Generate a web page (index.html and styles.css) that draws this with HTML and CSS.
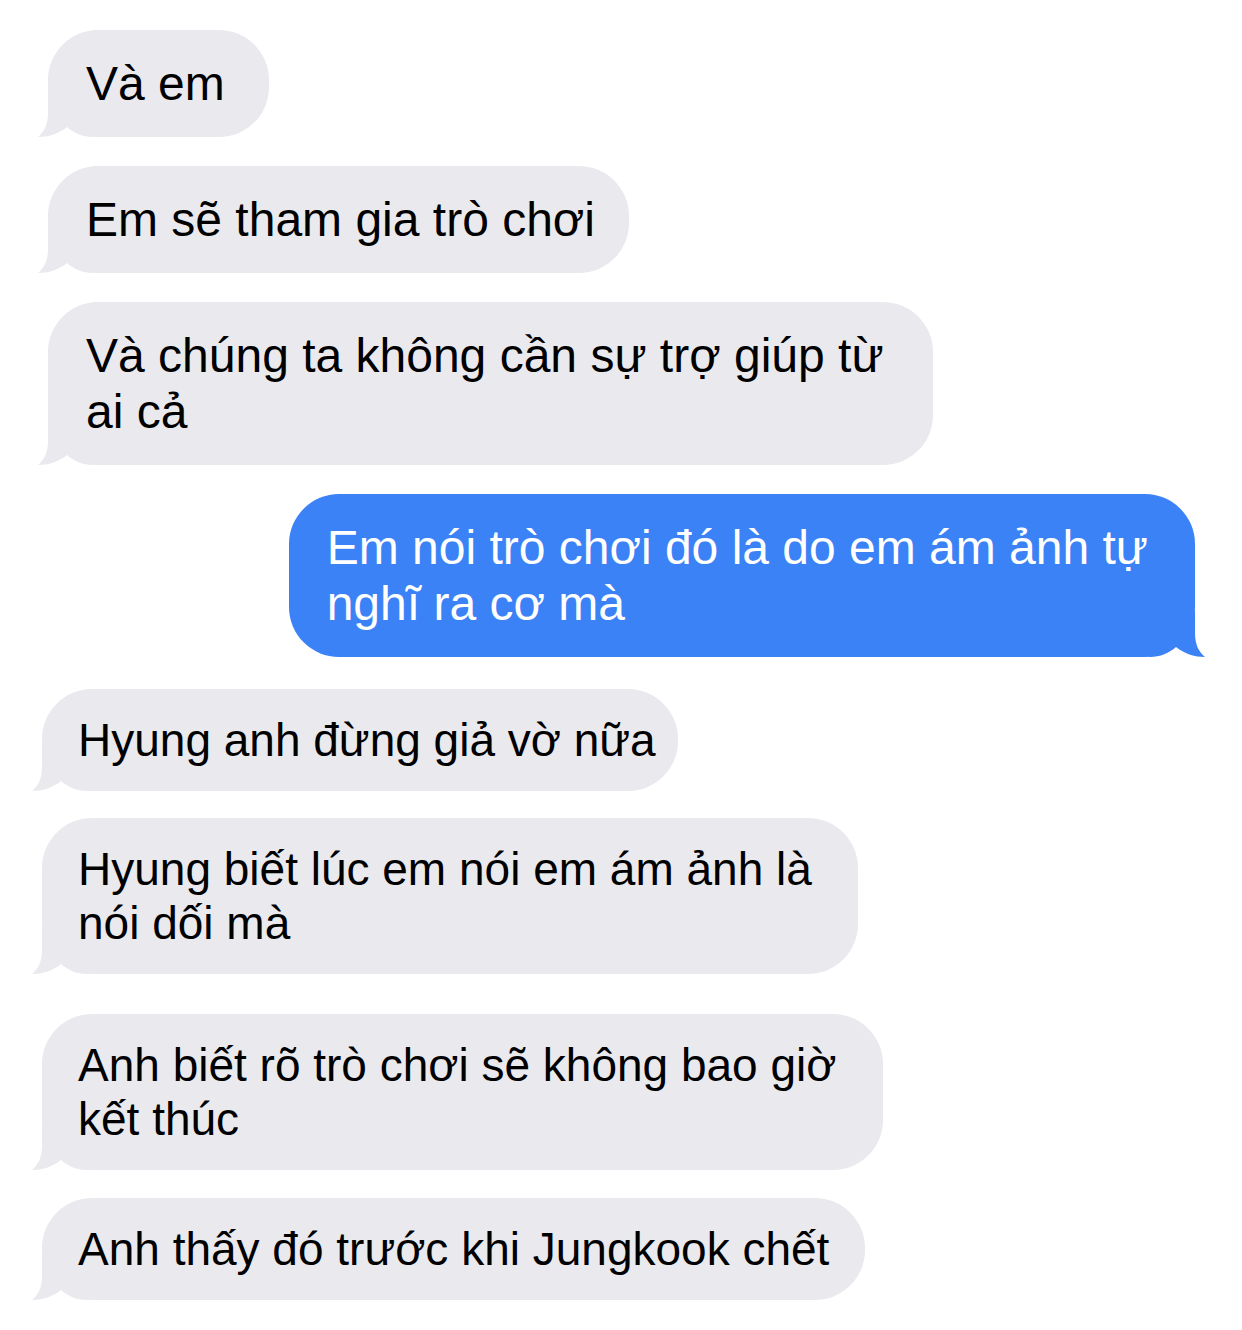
FILE: index.html
```html
<!DOCTYPE html>
<html lang="vi">
<head>
<meta charset="utf-8">
<title>Tin nhắn</title>
<link rel="stylesheet" href="styles.css">
</head>
<body>
<main class="chat">
  <div class="bubble in top w1">Và em<svg class="tail" viewBox="0 0 56 46" width="56" height="46"><path d="M10 0 L10 22 C10 34 6 41 0 46 C10 46 20 43 29 36 C36 42 44 46 56 46 L56 0 Z"/></svg></div>
  <div class="bubble in top g2 w2">Em sẽ tham gia trò chơi<svg class="tail" viewBox="0 0 56 46" width="56" height="46"><path d="M10 0 L10 22 C10 34 6 41 0 46 C10 46 20 43 29 36 C36 42 44 46 56 46 L56 0 Z"/></svg></div>
  <div class="bubble in top g2 w3">Và chúng ta không cần sự trợ giúp từ<br>ai cả<svg class="tail" viewBox="0 0 56 46" width="56" height="46"><path d="M10 0 L10 22 C10 34 6 41 0 46 C10 46 20 43 29 36 C36 42 44 46 56 46 L56 0 Z"/></svg></div>
  <div class="bubble out top g2 w4">Em nói trò chơi đó là do em ám ảnh tự<br>nghĩ ra cơ mà<svg class="tail" viewBox="0 0 56 46" width="56" height="46"><path d="M10 0 L10 22 C10 34 6 41 0 46 C10 46 20 43 29 36 C36 42 44 46 56 46 L56 0 Z"/></svg></div>
  <div class="bubble in bottom g3 w5">Hyung anh đừng giả vờ nữa<svg class="tail" viewBox="0 0 56 46" width="56" height="46"><path d="M10 0 L10 22 C10 34 6 41 0 46 C10 46 20 43 29 36 C36 42 44 46 56 46 L56 0 Z"/></svg></div>
  <div class="bubble in bottom g4 w6">Hyung biết lúc em nói em ám ảnh là<br>nói dối mà<svg class="tail" viewBox="0 0 56 46" width="56" height="46"><path d="M10 0 L10 22 C10 34 6 41 0 46 C10 46 20 43 29 36 C36 42 44 46 56 46 L56 0 Z"/></svg></div>
  <div class="bubble in bottom g5 w7">Anh biết rõ trò chơi sẽ không bao giờ<br>kết thúc<svg class="tail" viewBox="0 0 56 46" width="56" height="46"><path d="M10 0 L10 22 C10 34 6 41 0 46 C10 46 20 43 29 36 C36 42 44 46 56 46 L56 0 Z"/></svg></div>
  <div class="bubble in bottom g6">Anh thấy đó trước khi Jungkook chết<svg class="tail" viewBox="0 0 56 46" width="56" height="46"><path d="M10 0 L10 22 C10 34 6 41 0 46 C10 46 20 43 29 36 C36 42 44 46 56 46 L56 0 Z"/></svg></div>
</main>
</body>
</html>
```

FILE: styles.css
```css
html {
  background: #ffffff;
}

html, body {
  margin: 0;
  padding: 0;
}

.chat {
  width: 1242px;
  height: 1330px;
  box-sizing: border-box;
  padding-top: 30px;
  display: flex;
  flex-direction: column;
  align-items: flex-start;
  font-family: "Liberation Sans", Arial, sans-serif;
}

.bubble {
  position: relative;
  border-radius: 50px;
  white-space: nowrap;
}

.bubble.top {
  font-size: 48px;
  line-height: 56px;
  padding: 25.5px 38px 25.5px 38px;
}

.bubble.bottom {
  font-size: 46px;
  line-height: 54px;
  padding: 24px 36px 24px 36px;
}

.bubble.in {
  background: #e9e9ee;
  color: #000000;
  fill: #e9e9ee;
}

.bubble.in.top {
  margin-left: 48px;
}

.bubble.in.bottom {
  margin-left: 42px;
}

.bubble.out {
  align-self: flex-end;
  margin-right: 47px;
  background: #3b82f6;
  color: #ffffff;
  fill: #3b82f6;
}

.tail {
  position: absolute;
  bottom: 0;
  left: -10px;
  display: block;
  z-index: -1;
}

.bubble.out .tail {
  left: auto;
  right: -10px;
  transform: scaleX(-1);
}

/* widths nudged toward the reference bubbles */
.bubble.w1 { padding-right: 44px; }
.bubble.w2 { padding-right: 34px; }
.bubble.w3 { padding-right: 49px; }
.bubble.w4 { padding-left: 38px; padding-right: 47px; }
.bubble.w5 { padding-right: 22px; }
.bubble.w6 { padding-right: 46px; }
.bubble.w7 { padding-right: 47px; }

.g2 { margin-top: 29px; }
.g3 { margin-top: 32px; }
.g4 { margin-top: 27px; }
.g5 { margin-top: 40px; }
.g6 { margin-top: 28px; }
```
